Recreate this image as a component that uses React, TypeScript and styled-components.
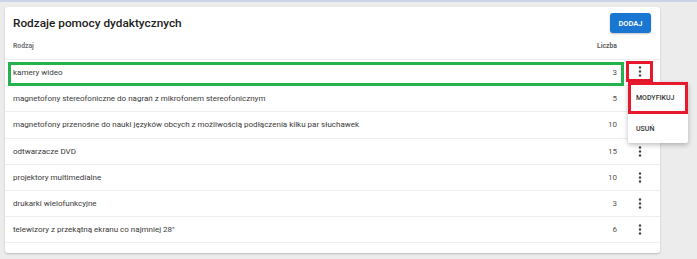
import React from 'react';
import styled, { createGlobalStyle } from 'styled-components';

const GlobalStyle = createGlobalStyle`
    html, body {
        margin: 0;
        padding: 0;
        background: #ececec;
        font-family: Roboto, 'Liberation Sans', Arial, sans-serif;
        color: #212121;
    }
`;

const ITEMS = [
    { name: 'kamery wideo', count: 3 },
    { name: 'magnetofony stereofoniczne do nagrań z mikrofonem stereofonicznym', count: 5 },
    {
        name: 'magnetofony przenośne do nauki języków obcych z możliwością podłączenia kilku par słuchawek',
        count: 10,
    },
    { name: 'odtwarzacze DVD', count: 15 },
    { name: 'projektory multimedialne', count: 10 },
    { name: 'drukarki wielofunkcyjne', count: 3 },
    { name: 'telewizory z przekątną ekranu co najmniej 28"', count: 6 },
];

const Page = styled.div`
    width: 697px;
    height: 259px;
    overflow: hidden;
    border-top: 2px solid #c9d5e6;
    box-sizing: border-box;
    padding: 5px 37px 0 5px;
`;

const Card = styled.div`
    background: #fff;
    border-radius: 3px;
    box-shadow: 0 1px 2px rgba(0, 0, 0, 0.22);
    height: 246px;
    box-sizing: border-box;
`;

const TitleBar = styled.div`
    display: flex;
    align-items: center;
    justify-content: space-between;
    padding: 6px 9px 0 8px;
    height: 26px;
    box-sizing: border-box;
`;

const Title = styled.h2`
    margin: 0;
    font-size: 11.8px;
    font-weight: 500;
`;

const AddButton = styled.button`
    background: #1976d2;
    color: #fff;
    border: none;
    border-radius: 3px;
    height: 20px;
    width: 41px;
    font-family: inherit;
    font-size: 7.5px;
    font-weight: 600;
    box-shadow: 0 1px 2px rgba(0, 0, 0, 0.25);
    padding: 0;
`;

const Row = styled.div<{ $header?: boolean }>`
    position: relative;
    display: flex;
    align-items: center;
    height: ${p => (p.$header ? 27 : 26.2)}px;
    border-bottom: 1px solid #eeeeee;
    box-sizing: border-box;
    font-size: ${p => (p.$header ? 6.8 : 8)}px;
    font-weight: ${p => (p.$header ? 600 : 400)};
    color: ${p => (p.$header ? '#6b6b6b' : '#3a3a3a')};
`;

const Main = styled.div<{ $marked?: boolean }>`
    position: relative;
    flex: 1;
    display: flex;
    align-items: center;
    height: 100%;
    padding: 0 7px 0 8px;

    ${p =>
        p.$marked &&
        `
        &::after {
            content: '';
            position: absolute;
            left: 3px;
            right: 0;
            top: 2px;
            bottom: -1px;
            border: 3px solid #23b24b;
            pointer-events: none;
        }
    `}
`;

const Name = styled.span`
    flex: 1;
    white-space: nowrap;
`;

const Count = styled.span`
    color: #555;
`;

const ActionCell = styled.div`
    position: relative;
    width: 36px;
    height: 100%;
    display: flex;
    align-items: center;
    justify-content: flex-start;
`;

const Kebab = styled.span<{ $marked?: boolean }>`
    display: flex;
    align-items: center;
    justify-content: center;
    width: 27px;
    height: 21px;
    margin-left: 2px;
    box-sizing: border-box;
    border: ${p => (p.$marked ? '3px solid #e8192c' : '3px solid transparent')};
    margin-top: ${p => (p.$marked ? '-3px' : '0')};
`;

const Menu = styled.div`
    position: absolute;
    top: 22px;
    left: 4px;
    width: 60px;
    background: #fff;
    box-shadow: 0 2px 5px rgba(0, 0, 0, 0.25);
    border-radius: 2px;
    z-index: 5;
`;

const MenuItem = styled.div<{ $marked?: boolean }>`
    height: ${p => (p.$marked ? 32 : 29)}px;
    display: flex;
    align-items: center;
    box-sizing: border-box;
    font-size: 7px;
    font-weight: 500;
    color: #333;
    border: ${p => (p.$marked ? '3px solid #e8192c' : 'none')};
    padding-left: ${p => (p.$marked ? 5 : 8)}px;
`;

const DotsIcon = () => (
    <svg width='4' height='11' viewBox='0 0 4 11'>
        <circle cx='2' cy='1.5' r='1.2' fill='#444' />
        <circle cx='2' cy='5.5' r='1.2' fill='#444' />
        <circle cx='2' cy='9.5' r='1.2' fill='#444' />
    </svg>
);

export default function App() {
    return (
        <>
            <GlobalStyle />
            <Page>
                <Card>
                    <TitleBar>
                        <Title>Rodzaje pomocy dydaktycznych</Title>
                        <AddButton>DODAJ</AddButton>
                    </TitleBar>
                    <Row $header>
                        <Main>
                            <Name>Rodzaj</Name>
                            <Count>Liczba</Count>
                        </Main>
                        <ActionCell />
                    </Row>
                    {ITEMS.map((item, i) => (
                        <Row key={item.name}>
                            <Main $marked={i === 0}>
                                <Name>{item.name}</Name>
                                <Count>{item.count}</Count>
                            </Main>
                            <ActionCell>
                                <Kebab $marked={i === 0}>
                                    <DotsIcon />
                                </Kebab>
                                {i === 0 && (
                                    <Menu>
                                        <MenuItem $marked>MODYFIKUJ</MenuItem>
                                        <MenuItem>USUŃ</MenuItem>
                                    </Menu>
                                )}
                            </ActionCell>
                        </Row>
                    ))}
                </Card>
            </Page>
        </>
    );
}
